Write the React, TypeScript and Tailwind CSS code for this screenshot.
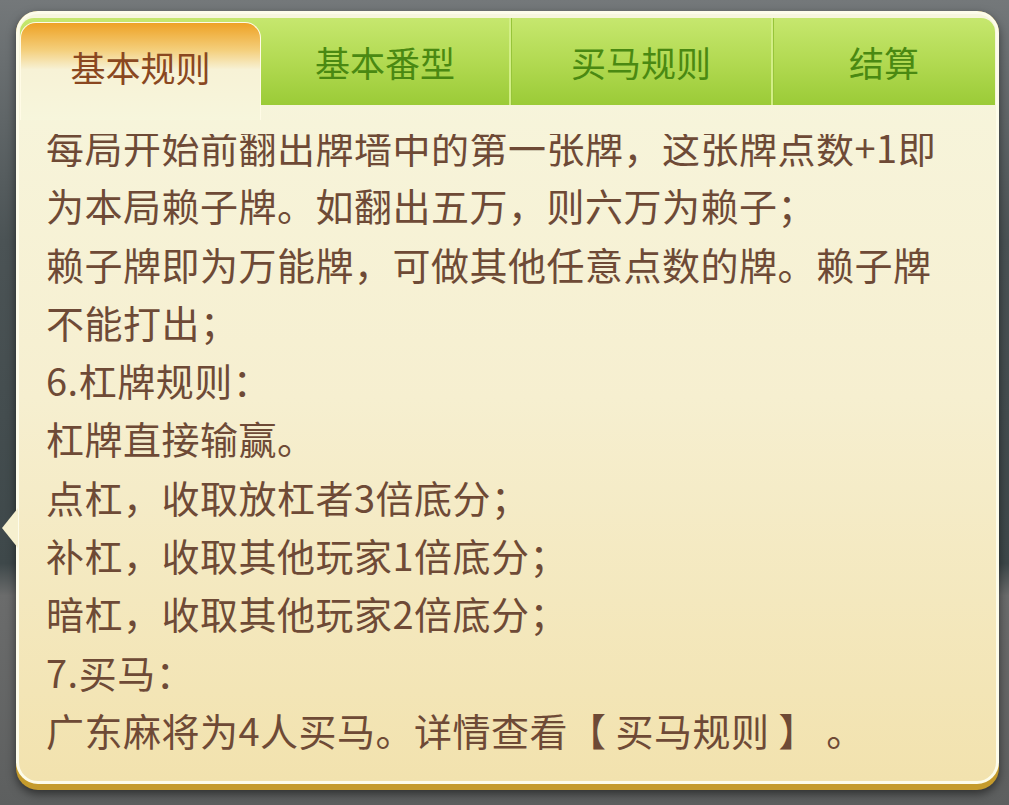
const lines = [
  "每局开始前翻出牌墙中的第一张牌，这张牌点数+1即",
  "为本局赖子牌。如翻出五万，则六万为赖子；",
  "赖子牌即为万能牌，可做其他任意点数的牌。赖子牌",
  "不能打出；",
  "6.杠牌规则：",
  "杠牌直接输赢。",
  "点杠，收取放杠者3倍底分；",
  "补杠，收取其他玩家1倍底分；",
  "暗杠，收取其他玩家2倍底分；",
  "7.买马：",
  "广东麻将为4人买马。详情查看【 买马规则 】 。",
];

export default function App() {
  return (
    <div
      className="relative h-[805px] w-[1009px] overflow-hidden bg-[linear-gradient(180deg,#74787a_0%,#4b5355_30%,#3e484a_70%,#6b6c6c_74%,#5d5f5f_100%)] pt-[11px] pl-[16px]"
      style={{ fontFamily: '"Noto Sans CJK SC", "Noto Sans", sans-serif' }}
    >
      {/* little pointer on the left edge */}
      <svg className="absolute left-0 top-[508px]" width="18" height="40" viewBox="0 0 18 40">
        <path d="M18 0 L2 20 L18 40 Z" fill="#f6f0cf" />
      </svg>

      {/* gold bottom lip */}
      <div className="h-[779px] w-[983px] rounded-[22px] bg-[#c59b2c] shadow-[0_4px_10px_rgba(0,0,0,0.5)]">
        <div className="flex h-[773px] flex-col rounded-[22px] border-[3px] border-[#fdfcea] bg-[linear-gradient(180deg,#f7f6de_0%,#f6efd0_50%,#f2e2ae_100%)]">
          {/* tab bar */}
          <div className="mx-[1px] mt-[4px] flex h-[87px] rounded-t-[14px] bg-[linear-gradient(180deg,#c6e76e_0%,#b2da52_50%,#9bcb37_100%)]">
            <div className="relative z-10 mt-[4px] flex h-[98px] w-[241px] items-start justify-center rounded-t-[16px] border-x border-t border-[#fffbe6] bg-[linear-gradient(180deg,#eea225_0%,#f4cf7c_28%,#f7f2d6_48%,#f7f6dc_100%)] pt-[22px] text-[35px] leading-[44px] text-[#8a4720]">
              基本规则
            </div>
            <div className="flex w-[248px] items-center justify-center pt-[1px] text-[35px] text-[#4a8912]">
              基本番型
            </div>
            <div className="flex w-[262px] items-center justify-center border-l-2 border-[#d2ee86] pt-[1px] text-[35px] text-[#4a8912] shadow-[inset_1px_0_0_#97c43a]">
              买马规则
            </div>
            <div className="flex flex-1 items-center justify-center border-l-2 border-[#d2ee86] pt-[1px] text-[35px] text-[#4a8912] shadow-[inset_1px_0_0_#97c43a]">
              结算
            </div>
          </div>

          {/* scrolled rule text */}
          <div className="mt-[29px] flex-1 overflow-hidden pl-[27px]">
            <div className="-mt-[16px] text-[38px] leading-[58.3px] tracking-[0.5px] text-[#6e4a36]">
              {lines.map((l) => (
                <div key={l} className="whitespace-nowrap">
                  {l}
                </div>
              ))}
            </div>
          </div>
        </div>
      </div>
    </div>
  );
}
